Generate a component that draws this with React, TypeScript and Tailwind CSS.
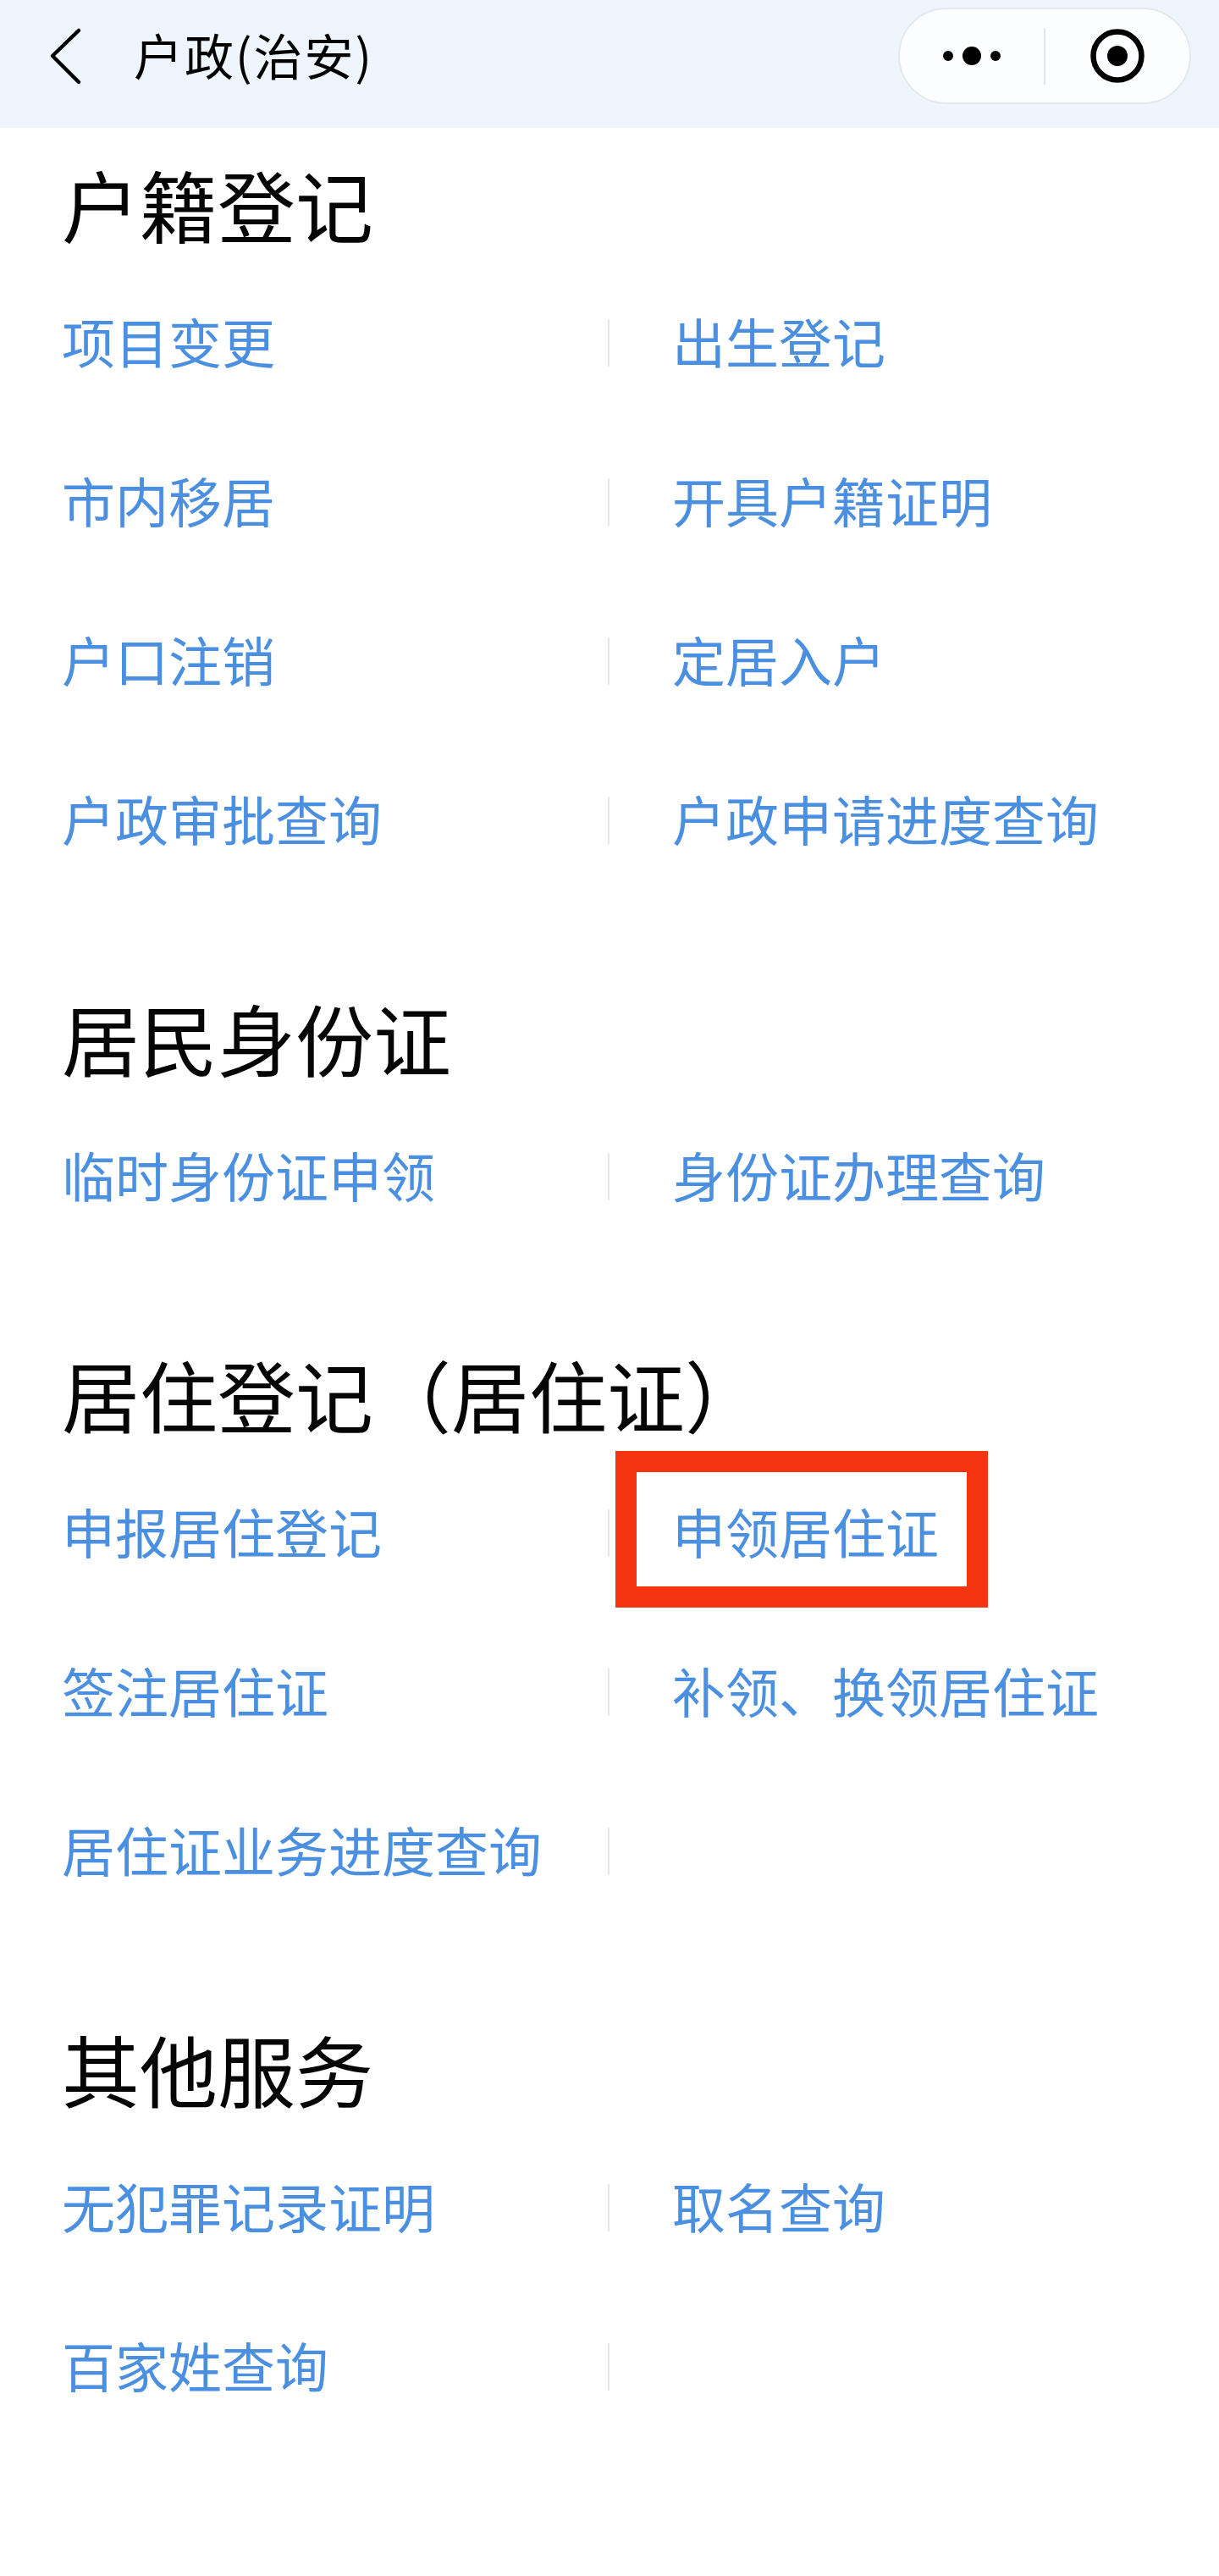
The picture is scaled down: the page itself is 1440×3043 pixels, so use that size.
import React from 'react'

type Row = [string, string?]

type Section = {
  title: string
  rows: Row[]
}

const sections: Section[] = [
  {
    title: '户籍登记',
    rows: [
      ['项目变更', '出生登记'],
      ['市内移居', '开具户籍证明'],
      ['户口注销', '定居入户'],
      ['户政审批查询', '户政申请进度查询'],
    ],
  },
  {
    title: '居民身份证',
    rows: [['临时身份证申领', '身份证办理查询']],
  },
  {
    title: '居住登记（居住证）',
    rows: [
      ['申报居住登记', '申领居住证'],
      ['签注居住证', '补领、换领居住证'],
      ['居住证业务进度查询'],
    ],
  },
  {
    title: '其他服务',
    rows: [['无犯罪记录证明', '取名查询'], ['百家姓查询']],
  },
]

const marked = '申领居住证'

function NavBar() {
  return (
    <header className="h-[151px] bg-[#eef5fd] pt-[9px]">
      <div className="flex h-[114px] items-center pl-[58px] pr-[33px]">
        <svg width="40" height="70" viewBox="0 0 40 70" fill="none">
          <polyline points="35,5 4,35 35,66" stroke="#000" strokeWidth="4.5" strokeLinecap="round" strokeLinejoin="round" />
        </svg>
        <span className="ml-[60px] pb-[4px] text-[58px] leading-none tracking-[2px] text-black">户政(治安)</span>

        <div className="ml-auto flex h-[114px] w-[346px] items-center rounded-full border-2 border-[#e4e8ee] bg-[#fcfdff]">
          <div className="flex flex-1 items-center justify-center">
            <svg width="68" height="24" viewBox="0 0 68 24">
              <circle cx="6" cy="12" r="6" fill="#000" />
              <circle cx="34" cy="12" r="11" fill="#000" />
              <circle cx="62" cy="12" r="6" fill="#000" />
            </svg>
          </div>
          <div className="h-[67px] w-[2px] bg-[#e2e5ea]" />
          <div className="flex flex-1 items-center justify-center">
            <svg width="66" height="66" viewBox="0 0 66 66">
              <circle cx="33" cy="33" r="28.5" fill="none" stroke="#000" strokeWidth="6.5" />
              <circle cx="33" cy="33" r="12" fill="#000" />
            </svg>
          </div>
        </div>
      </div>
    </header>
  )
}

function ServiceRow({ row }: { row: Row }) {
  const [left, right] = row
  return (
    <div className="flex h-[188px] items-center">
      <div className="w-[645px] pb-[8px] text-[63px] leading-none text-[#4a8fe0]">{left}</div>
      <div className="h-[56px] w-[2px] bg-[#e6e6e6]" />
      <div className="relative flex h-full flex-1 items-center pb-[8px] pl-[74px] text-[63px] leading-none text-[#4a8fe0]">
        {right}
        {right === marked && (
          <div className="absolute left-[7px] top-[-3px] h-[185px] w-[440px] border-[25px] border-[#f3340f]" />
        )}
      </div>
    </div>
  )
}

export default function App() {
  return (
    <div className='min-h-[3043px] bg-white font-[family-name:"Noto_Sans_CJK_SC",sans-serif]'>
      <NavBar />
      <main className="flex flex-col gap-[108px] pl-[73px] pt-[35px]">
        {sections.map((s) => (
          <section key={s.title}>
            <h2 className="flex h-[125px] items-center pb-[18px] text-[92px] font-normal leading-none text-[#050505]">
              {s.title}
            </h2>
            {s.rows.map((r) => (
              <ServiceRow key={r[0]} row={r} />
            ))}
          </section>
        ))}
      </main>
    </div>
  )
}
